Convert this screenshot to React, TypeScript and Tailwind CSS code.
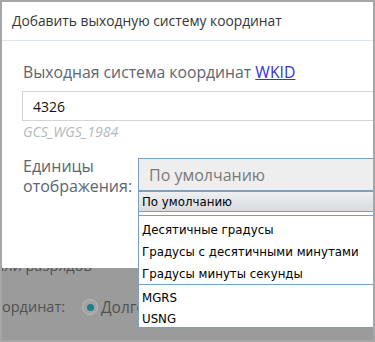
import React from "react";

const sans = { fontFamily: '"Open Sans", "Noto Sans", sans-serif' };
const verdana = { fontFamily: '"DejaVu Sans", Verdana, sans-serif' };

export default function App() {
  return (
    <div
      className="relative flex h-[342px] w-[375px] flex-col overflow-hidden border-2 border-[#a6a6a6] bg-[#9b9b9b]"
      style={sans}
    >
      {/* Dialog */}
      <div className="relative z-10 h-[266px] w-[420px] shrink-0 bg-white">
        <div className="flex h-[39px] items-center border-b border-[#dde6ec] pl-[10px] text-[13.8px] text-[#363636]">
          Добавить выходную систему координат
        </div>
        <div className="pl-[21px] pt-[20px]">
          <div className="text-[15.75px] leading-[22px] text-[#5a6672]">
            Выходная система координат{" "}
            <span className="text-[#3535d8] underline">WKID</span>
          </div>
          <div className="ml-[-1px] mt-[8px] flex h-[30px] w-[420px] items-center border border-[#d4d4d4] pl-[10px] text-[14px] text-[#111]">
            4326
          </div>
          <div className="mt-[1px] text-[14px] italic leading-[20px] text-[#b0b9c1]">
            GCS_WGS_1984
          </div>
          <div className="mt-[14px] flex items-start">
            <div className="w-[115px] shrink-0 text-[16px] leading-[20px] text-[#5a6672]">
              Единицы
              <br />
              отображения:
            </div>
            <div className="relative mt-[2px] shrink-0">
              <div className="flex h-[33px] w-[300px] items-center border border-[#7a9fc4] bg-[#eeeeee] pl-[10px] text-[16px] text-[#7a7a7a]">
                По умолчанию
              </div>
              {/* Dropdown list */}
              <div
                className="absolute left-0 top-full w-[300px] border border-[#7a9fc4] bg-white text-[11.8px] leading-[16px] text-black"
                style={verdana}
              >
                <div className="flex h-[20px] items-center border-b border-[#7a9fc4] bg-gradient-to-b from-[#eef0f2] to-[#d7dbdf] pl-[3px]">
                  По умолчанию
                </div>
                <div className="h-[3px]" />
                <div className="border-t border-b border-[#7a9fc4] pb-[1px] pt-[1px]">
                  <div className="flex h-[22px] items-center pl-[3px] pt-[4px]">Десятичные градусы</div>
                  <div className="flex h-[22px] items-center pl-[3px] pt-[4px]">
                    Градусы с десятичными минутами
                  </div>
                  <div className="flex h-[22px] items-center pl-[3px] pt-[4px]">Градусы минуты секунды</div>
                </div>
                <div>
                  <div className="flex h-[21px] items-center pl-[3px] pt-[4px]">MGRS</div>
                  <div className="flex h-[21px] items-center pl-[3px] pt-[4px]">USNG</div>
                </div>
              </div>
            </div>
          </div>
        </div>
      </div>

      {/* Dimmed background content */}
      <div className="relative text-[14.5px] leading-[20px] text-[#515151]">
        <div className="-mt-[12px] ml-[-7px] whitespace-nowrap">или разрядов</div>
        <div className="mt-[21px] flex h-[20px] w-[136px] items-center overflow-hidden">
          <div className="w-[80px] shrink-0">ординат:</div>
          <div className="flex h-[16px] w-[16px] shrink-0 items-center justify-center rounded-full border-[1.5px] border-[#bcbcbc] bg-[#a3a3a3]">
            <div className="h-[7px] w-[7px] rounded-full bg-[#1b7f8c]" />
          </div>
          <div className="ml-[3px] whitespace-nowrap text-[15.5px]">Долгота</div>
        </div>
      </div>
    </div>
  );
}
